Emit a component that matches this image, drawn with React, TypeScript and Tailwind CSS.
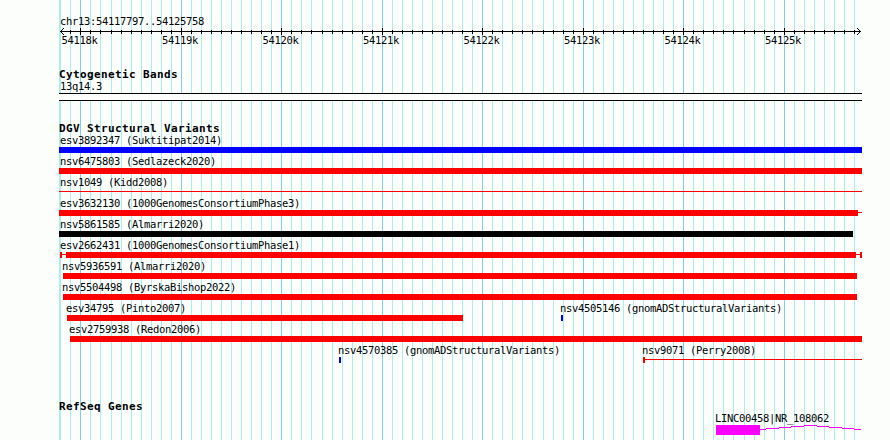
type Feature = {
  label: string;
  labelX: number;
  color: string;
  start: number;
  end: number;
  thin?: boolean;
  // confidence interval drawn as a thin line, with optional end caps
  outerStart?: number;
  outerEnd?: number;
  capStart?: boolean;
  capEnd?: boolean;
};

const LEFT = 59;
const RIGHT = 862;

const RED = "bg-[#ff0000]";
const BLUE = "bg-[#0000ff]";
const BLACK = "bg-black";

const LABEL =
  "font-['DejaVu_Sans_Mono','Liberation_Mono',monospace] text-[10.5px] tracking-[-0.321px] whitespace-pre text-black";
const TITLE =
  "font-['DejaVu_Sans_Mono','Liberation_Mono',monospace] text-[11px] font-bold tracking-[0.378px] leading-[13px] whitespace-pre text-black";

const rows: Feature[][] = [
  [{ label: "esv3892347 (Suktitipat2014)", labelX: 60, color: BLUE, start: LEFT, end: RIGHT }],
  [{ label: "nsv6475803 (Sedlazeck2020)", labelX: 60, color: RED, start: LEFT, end: RIGHT }],
  [{ label: "nsv1049 (Kidd2008)", labelX: 60, color: RED, start: LEFT, end: RIGHT, thin: true }],
  [{ label: "esv3632130 (1000GenomesConsortiumPhase3)", labelX: 60, color: RED, start: LEFT, end: 858, outerEnd: RIGHT }],
  [{ label: "nsv5861585 (Almarri2020)", labelX: 60, color: BLACK, start: LEFT, end: 853 }],
  [
    {
      label: "esv2662431 (1000GenomesConsortiumPhase1)",
      labelX: 60,
      color: RED,
      start: 66,
      end: 856,
      outerStart: 60,
      outerEnd: RIGHT,
      capStart: true,
      capEnd: true,
    },
  ],
  [{ label: "nsv5936591 (Almarri2020)", labelX: 62, color: RED, start: 63, end: 857 }],
  [{ label: "nsv5504498 (ByrskaBishop2022)", labelX: 62, color: RED, start: 63, end: 857 }],
  [
    { label: "esv34795 (Pinto2007)", labelX: 66, color: RED, start: 67, end: 463 },
    { label: "nsv4505146 (gnomADStructuralVariants)", labelX: 560, color: BLUE, start: 561, end: 563 },
  ],
  [{ label: "esv2759938 (Redon2006)", labelX: 69, color: RED, start: 70, end: RIGHT }],
  [
    { label: "nsv4570385 (gnomADStructuralVariants)", labelX: 338, color: BLUE, start: 339, end: 341 },
    {
      label: "nsv9071 (Perry2008)",
      labelX: 642,
      color: RED,
      start: 643,
      end: RIGHT,
      thin: true,
      outerStart: 643,
      capStart: true,
    },
  ],
];

// 100bp ticks, counted from 54118k
const tickX = (i: number) =>
  80 + i * 10 + [3, 24, 46, 66].filter((step) => i >= step).length;

const ticks = Array.from({ length: 79 }, (_, n) => n - 1).map((i) => ({
  x: tickX(i),
  major: i % 10 === 0,
}));

const intron = [
  [760, 6, 4],
  [766, 13, 3],
  [779, 12, 2],
  [791, 13, 1],
  [804, 13, 0],
  [817, 12, 1],
  [829, 13, 2],
  [842, 12, 3],
  [854, 7, 4],
];

function GridLines() {
  return (
    <svg className="absolute inset-0" width="890" height="440" shapeRendering="crispEdges">
      <rect x={LEFT} width="2" height="440" fill="#aceeec" />
      {ticks.map((t) => (
        <rect key={t.x} x={t.x} width="1" height="440" fill={t.major ? "#84ccec" : "#aceeec"} />
      ))}
    </svg>
  );
}

function Ruler() {
  return (
    <svg className="block" width="890" height="8" shapeRendering="crispEdges">
      <rect x="60" y="3" width="801" height="1" />
      {ticks.map((t) => (
        <rect key={t.x} x={t.x} y={t.major ? 0 : 2} width="1" height={t.major ? 7 : 4} />
      ))}
      {[1, 2, 3].map((d) => (
        <g key={d}>
          <rect x={60 + d} y={3 - d} width="1" height="1" />
          <rect x={60 + d} y={3 + d} width="1" height="1" />
          <rect x={860 - d} y={3 - d} width="1" height="1" />
          <rect x={860 - d} y={3 + d} width="1" height="1" />
        </g>
      ))}
    </svg>
  );
}

function Segment({ color, from, to, thin }: { color: string; from: number; to: number; thin?: boolean }) {
  return (
    <div
      className={`col-start-1 row-start-1 ${color} ${thin ? "mt-[2px] h-px" : "h-1.5"}`}
      style={{ marginLeft: from, width: to - from }}
    />
  );
}

function FeatureGlyph({ f }: { f: Feature }) {
  const from = f.outerStart ?? f.start;
  const to = f.outerEnd ?? f.end;
  return (
    <div className="col-start-1 row-start-1">
      <div className={`h-3.5 leading-[14px] ${LABEL}`} style={{ marginLeft: f.labelX }}>
        {f.label}
      </div>
      <div className="grid h-[7px] items-start justify-start">
        <Segment color={f.color} from={from} to={to} thin />
        {!f.thin && <Segment color={f.color} from={f.start} to={f.end} />}
        {f.capStart && <Segment color={f.color} from={from} to={from + 2} />}
        {f.capEnd && <Segment color={f.color} from={to - 2} to={to} />}
      </div>
    </div>
  );
}

export default function App() {
  return (
    <div className="relative h-[440px] w-[890px] overflow-hidden bg-[#fcfefc]">
      <GridLines />
      <div className="relative flex flex-col">
        <div className={`mt-[15px] ml-[60px] h-[13px] leading-3 ${LABEL}`}>chr13:54117797..54125758</div>
        <Ruler />
        <div className="-mt-0.5 flex h-[34px] pl-[61.4px]">
          {["54118k", "54119k", "54120k", "54121k", "54122k", "54123k", "54124k", "54125k"].map((k) => (
            <div key={k} className={`w-[100.5px] leading-3 ${LABEL}`}>
              {k}
            </div>
          ))}
        </div>

        <div className={`ml-[59px] h-3 ${TITLE}`}>Cytogenetic Bands</div>
        <div className={`ml-[60px] h-[13px] leading-3 ${LABEL}`}>13q14.3</div>
        <div className="ml-[59px] h-2 w-[803px] border-y border-black bg-[#fcfefc]" />

        <div className={`mt-[21px] ml-[59px] h-[11px] ${TITLE}`}>DGV Structural Variants</div>
        <div>
          {rows.map((row) => (
            <div key={row[0].label} className="grid h-[21px]">
              {row.map((f) => (
                <FeatureGlyph key={f.label} f={f} />
              ))}
            </div>
          ))}
        </div>

        <div className={`mt-9 ml-[59px] h-[11px] ${TITLE}`}>RefSeq Genes</div>
        <div className={`ml-[715px] h-3.5 leading-[14px] ${LABEL}`}>LINC00458|NR_108062</div>
        <div className="flex pl-[716px]">
          <div className="h-2.5 w-11 bg-[#ff00ff]" />
          <svg width="102" height="10" viewBox="760 0 102 10" shapeRendering="crispEdges" fill="#ff00ff">
            {intron.map(([x, w, y]) => (
              <rect key={x} x={x} y={y} width={w} height="1" />
            ))}
          </svg>
        </div>
      </div>
    </div>
  );
}
